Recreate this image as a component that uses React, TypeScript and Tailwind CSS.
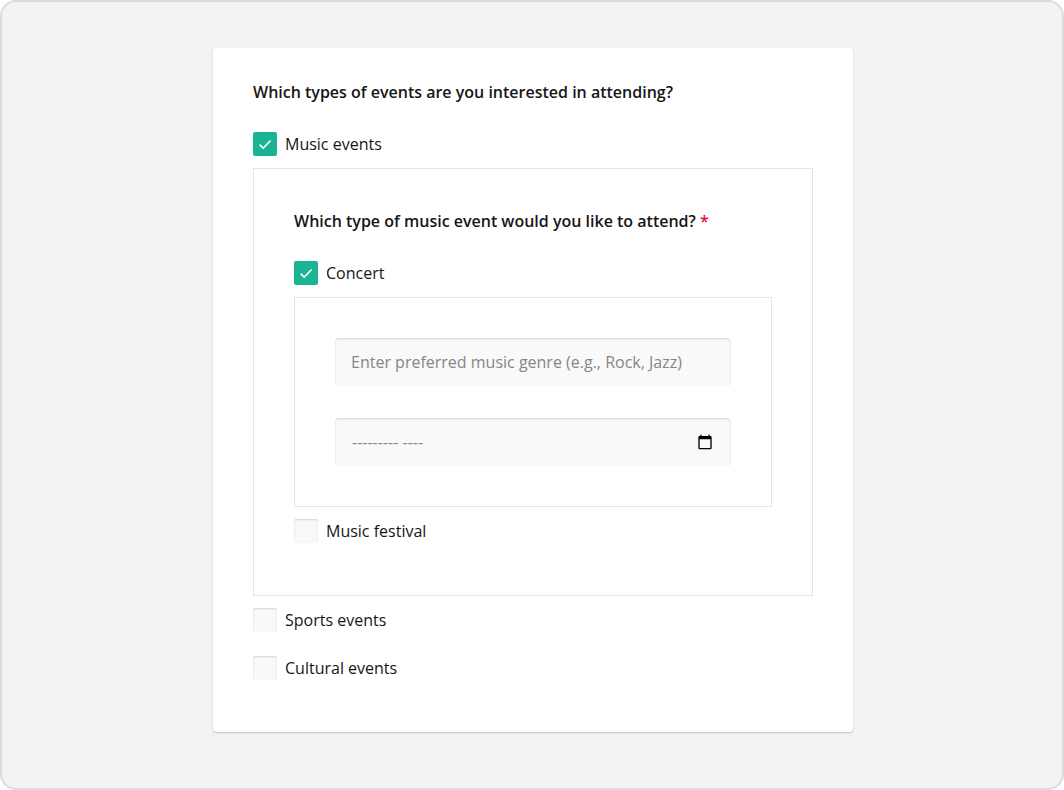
import { useState } from "react";
import type { ReactNode } from "react";

type CheckboxProps = {
  label: string;
  checked: boolean;
  onChange: (checked: boolean) => void;
};

function Checkbox({ label, checked, onChange }: CheckboxProps) {
  return (
    <label className="flex w-fit cursor-pointer items-center gap-2">
      <span className="grid size-6">
        <input
          type="checkbox"
          checked={checked}
          onChange={(e) => onChange(e.target.checked)}
          className="col-start-1 row-start-1 size-6 appearance-none rounded-xs bg-[#f9f9f9] shadow-[inset_0_1px_2px_rgba(0,0,0,0.15)] checked:bg-[#1ab394] checked:shadow-none"
        />
        {checked && (
          <svg
            viewBox="0 0 24 24"
            fill="none"
            stroke="#fff"
            strokeWidth="1.5"
            className="pointer-events-none col-start-1 row-start-1 size-6"
          >
            <path d="M6.6 12.6l3.6 3.5 7.4-7.6" />
          </svg>
        )}
      </span>
      {label}
    </label>
  );
}

function Panel({ children }: { children: ReactNode }) {
  return <div className="mt-3 mb-3 border border-[#e5e5e5] p-10">{children}</div>;
}

function MonthField() {
  return (
    <div className="flex h-12 items-center rounded bg-[#f9f9f9] pr-[18px] pl-[17px] shadow-[inset_0_1px_2px_rgba(0,0,0,0.15)]">
      <input
        type="text"
        aria-label="Preferred month"
        placeholder="--------- ----"
        className="min-w-0 flex-1 bg-transparent outline-none placeholder:text-[#868686]"
      />
      <button type="button" aria-label="Open calendar" className="cursor-pointer text-black">
        <svg viewBox="0 0 24 24" fill="currentColor" className="size-4">
          <path d="M20 3h-1V1h-2v2H7V1H5v2H4c-1.1 0-2 .9-2 2v16c0 1.1.9 2 2 2h16c1.1 0 2-.9 2-2V5c0-1.1-.9-2-2-2zm0 18H4V8h16v13z" />
        </svg>
      </button>
    </div>
  );
}

export default function App() {
  const [music, setMusic] = useState(true);
  const [concert, setConcert] = useState(true);
  const [festival, setFestival] = useState(false);
  const [sports, setSports] = useState(false);
  const [cultural, setCultural] = useState(false);

  return (
    <div className="bg-white">
      <main className="flex min-h-screen items-start justify-center rounded-2xl border-2 border-[#dcdcdc] bg-[#f3f3f3] pt-[46px] pr-6 pb-14 pl-[26px] font-['Open_Sans',sans-serif] text-base leading-6 text-[#161616]">
        <form className="w-full max-w-[640px] rounded bg-white px-10 pt-8 pb-[52px] shadow-[0_1px_2px_rgba(0,0,0,0.2)]">
          <fieldset>
            <legend className="mb-7 font-semibold">
              Which types of events are you interested in attending?
            </legend>
            <Checkbox label="Music events" checked={music} onChange={setMusic} />
            {music && (
              <Panel>
                <fieldset className="pb-3">
                  <legend className="mb-7 font-semibold">
                    Which type of music event would you like to attend?{" "}
                    <span className="text-[#e60a3e]">*</span>
                  </legend>
                  <Checkbox label="Concert" checked={concert} onChange={setConcert} />
                  {concert && (
                    <Panel>
                      <div className="flex flex-col gap-8">
                        <input
                          type="text"
                          aria-label="Preferred music genre"
                          placeholder="Enter preferred music genre (e.g., Rock, Jazz)"
                          className="block h-12 w-full rounded bg-[#f9f9f9] px-4 shadow-[inset_0_1px_2px_rgba(0,0,0,0.15)] outline-none placeholder:text-[#868686]"
                        />
                        <MonthField />
                      </div>
                    </Panel>
                  )}
                  <Checkbox label="Music festival" checked={festival} onChange={setFestival} />
                </fieldset>
              </Panel>
            )}
            <div className="flex flex-col gap-6">
              <Checkbox label="Sports events" checked={sports} onChange={setSports} />
              <Checkbox label="Cultural events" checked={cultural} onChange={setCultural} />
            </div>
          </fieldset>
        </form>
      </main>
    </div>
  );
}
